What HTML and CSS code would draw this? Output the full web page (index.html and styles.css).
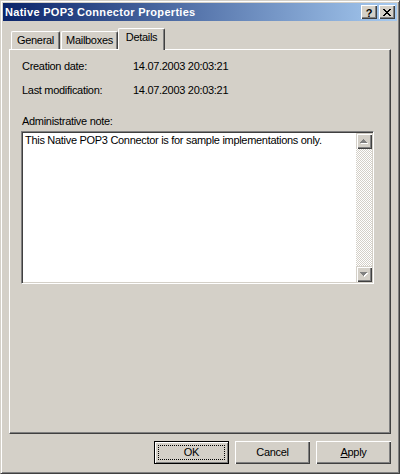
FILE: index.html
```html
<!DOCTYPE html>
<html>
<head>
<meta charset="utf-8">
<title>Native POP3 Connector Properties</title>
<link rel="stylesheet" href="styles.css">
</head>
<body>
<div class="window">
  <div class="titlebar">
    <span class="title">Native POP3 Connector Properties</span>
    <div class="caption-btns">
      <span class="cbtn help">?</span>
      <span class="cbtn close">
        <svg width="8" height="7" viewBox="0 0 8 7" shape-rendering="crispEdges">
          <g fill="#000">
            <rect x="0" y="0" width="2" height="1"/><rect x="6" y="0" width="2" height="1"/>
            <rect x="1" y="1" width="2" height="1"/><rect x="5" y="1" width="2" height="1"/>
            <rect x="2" y="2" width="4" height="1"/>
            <rect x="3" y="3" width="2" height="1"/>
            <rect x="2" y="4" width="4" height="1"/>
            <rect x="1" y="5" width="2" height="1"/><rect x="5" y="5" width="2" height="1"/>
            <rect x="0" y="6" width="2" height="1"/><rect x="6" y="6" width="2" height="1"/>
          </g>
        </svg>
      </span>
    </div>
  </div>
  <div class="client">
    <div class="tabs">
      <div class="tab tab-general">General</div>
      <div class="tab tab-mailboxes">Mailboxes</div>
      <div class="tab tab-details active">Details</div>
    </div>
    <div class="panel">
      <div class="row">
        <span class="lbl">Creation date:</span>
        <span class="val">14.07.2003 20:03:21</span>
      </div>
      <div class="row row-second">
        <span class="lbl">Last modification:</span>
        <span class="val">14.07.2003 20:03:21</span>
      </div>
      <div class="note-label">Administrative note:</div>
      <div class="textarea">
        <div class="ta-text">This Native POP3 Connector is for sample implementations only.</div>
        <div class="scrollbar">
          <div class="sbtn">
            <svg width="8" height="5" viewBox="0 0 8 5" shape-rendering="crispEdges">
              <g fill="#fff">
                <rect x="4" y="1" width="1" height="1"/><rect x="3" y="2" width="3" height="1"/>
                <rect x="2" y="3" width="5" height="1"/><rect x="1" y="4" width="7" height="1"/>
              </g>
              <g fill="#808080">
                <rect x="3" y="0" width="1" height="1"/><rect x="2" y="1" width="3" height="1"/>
                <rect x="1" y="2" width="5" height="1"/><rect x="0" y="3" width="7" height="1"/>
              </g>
            </svg>
          </div>
          <div class="track"></div>
          <div class="sbtn">
            <svg width="8" height="5" viewBox="0 0 8 5" shape-rendering="crispEdges">
              <g fill="#fff">
                <rect x="1" y="1" width="7" height="1"/><rect x="2" y="2" width="5" height="1"/>
                <rect x="3" y="3" width="3" height="1"/><rect x="4" y="4" width="1" height="1"/>
              </g>
              <g fill="#808080">
                <rect x="0" y="0" width="7" height="1"/><rect x="1" y="1" width="5" height="1"/>
                <rect x="2" y="2" width="3" height="1"/><rect x="3" y="3" width="1" height="1"/>
              </g>
            </svg>
          </div>
        </div>
      </div>
    </div>
    <div class="buttons">
      <button class="btn default"><span class="focus-text">OK</span></button>
      <button class="btn">Cancel</button>
      <button class="btn"><u>A</u>pply</button>
    </div>
  </div>
</div>
</body>
</html>
```
FILE: styles.css
```css
* {
  box-sizing: border-box;
}

html,
body {
  margin: 0;
  padding: 0;
  background: #d4d0c8;
}

body {
  font-family: "Liberation Sans", Arial, sans-serif;
  font-size: 11px;
  letter-spacing: -0.3px;
  color: #000;
}

.window {
  width: 400px;
  height: 474px;
  background: #d4d0c8;
  border: 1px solid;
  border-color: #d4d0c8 #404040 #404040 #d4d0c8;
  box-shadow: inset 1px 1px #fff, inset -1px -1px #808080;
  padding: 2px;
  display: flex;
  flex-direction: column;
}

.titlebar {
  height: 18px;
  flex: none;
  display: flex;
  align-items: center;
  padding: 0 2px 0 2px;
  background: linear-gradient(to right, #0a246a, #a6caf0);
}

.title {
  color: #fff;
  font-weight: bold;
  font-size: 11px;
  letter-spacing: 0.3px;
  line-height: 18px;
  white-space: nowrap;
}

.caption-btns {
  margin-left: auto;
  display: flex;
  gap: 2px;
}

.cbtn {
  width: 16px;
  height: 14px;
  background: #d4d0c8;
  box-shadow: inset 1px 1px #fff, inset -1px -1px #404040, inset -2px -2px #808080;
  display: flex;
  align-items: center;
  justify-content: center;
}

.help {
  font-weight: bold;
  font-size: 11px;
  line-height: 14px;
  letter-spacing: 0;
  padding-top: 1px;
}

.close svg {
  display: block;
  margin-top: 0;
}

.client {
  flex: 1;
  display: flex;
  flex-direction: column;
  padding: 0 6px 0 6px;
}

.tabs {
  margin-top: 7px;
  height: 21px;
  display: flex;
  align-items: flex-end;
  padding-left: 2px;
}

.tab {
  height: 18px;
  line-height: 17px;
  text-align: center;
  border-top: 1px solid #fff;
  border-left: 1px solid #fff;
  border-right: 1px solid #404040;
  box-shadow: inset -1px 0 #808080;
  border-top-left-radius: 2px;
  border-top-right-radius: 2px;
  background: #d4d0c8;
  white-space: nowrap;
}

.tab-general {
  width: 49px;
  margin-right: 1px;
}

.tab-mailboxes {
  width: 57px;
}

.tab-details {
  width: 47px;
}

.tab.active {
  height: 22px;
  margin-bottom: -1px;
  position: relative;
  z-index: 2;
}

.panel {
  width: 382px;
  height: 385px;
  border-top: 1px solid #fff;
  border-left: 1px solid #fff;
  border-right: 1px solid #404040;
  border-bottom: 1px solid #404040;
  box-shadow: inset -1px -1px #808080;
  padding: 10px 0 0 12px;
  display: flex;
  flex-direction: column;
}

.row {
  display: flex;
  line-height: 13px;
  height: 13px;
}

.row-second {
  margin-top: 11px;
}

.lbl {
  width: 111px;
}

.note-label {
  margin-top: 18px;
  line-height: 13px;
  height: 13px;
}

.textarea {
  margin-top: 3px;
  margin-left: -1px;
  width: 353px;
  height: 153px;
  border: 1px solid;
  border-color: #808080 #fff #fff #808080;
  box-shadow: inset 1px 1px #404040, inset -1px -1px #d4d0c8;
  background: #fff;
  padding: 1px;
  display: flex;
}

.ta-text {
  flex: 1;
  padding: 1px 2px;
  line-height: 13px;
  white-space: nowrap;
}

.scrollbar {
  width: 16px;
  display: flex;
  flex-direction: column;
}

.sbtn {
  width: 16px;
  height: 16px;
  background: #d4d0c8;
  box-shadow: inset 1px 1px #d4d0c8, inset 2px 2px #fff, inset -1px -1px #404040, inset -2px -2px #808080;
  display: flex;
  align-items: center;
  justify-content: center;
}

.sbtn svg {
  display: block;
}

.track {
  flex: 1;
  background-color: #fff;
  background-image: conic-gradient(#d4d0c8 25%, #fff 0 50%, #d4d0c8 0 75%, #fff 0);
  background-size: 2px 2px;
}

.buttons {
  display: flex;
  justify-content: flex-end;
  gap: 6px;
  margin-top: 7px;
  padding-right: 0;
}

.btn {
  width: 75px;
  height: 23px;
  font: inherit;
  letter-spacing: inherit;
  color: #000;
  background: #d4d0c8;
  border: none;
  padding: 0;
  margin: 0;
  line-height: 23px;
  text-align: center;
  box-shadow: inset 1px 1px #fff, inset -1px -1px #404040, inset -2px -2px #808080;
}

.btn u {
  text-decoration: underline;
}

.btn.default {
  border: 1px solid #000;
  box-shadow: inset 1px 1px #fff, inset -1px -1px #808080;
  line-height: 21px;
  position: relative;
}

.btn.default::after {
  content: "";
  position: absolute;
  left: 3px;
  top: 3px;
  right: 3px;
  bottom: 3px;
  border: 1px dotted #000;
}
```
